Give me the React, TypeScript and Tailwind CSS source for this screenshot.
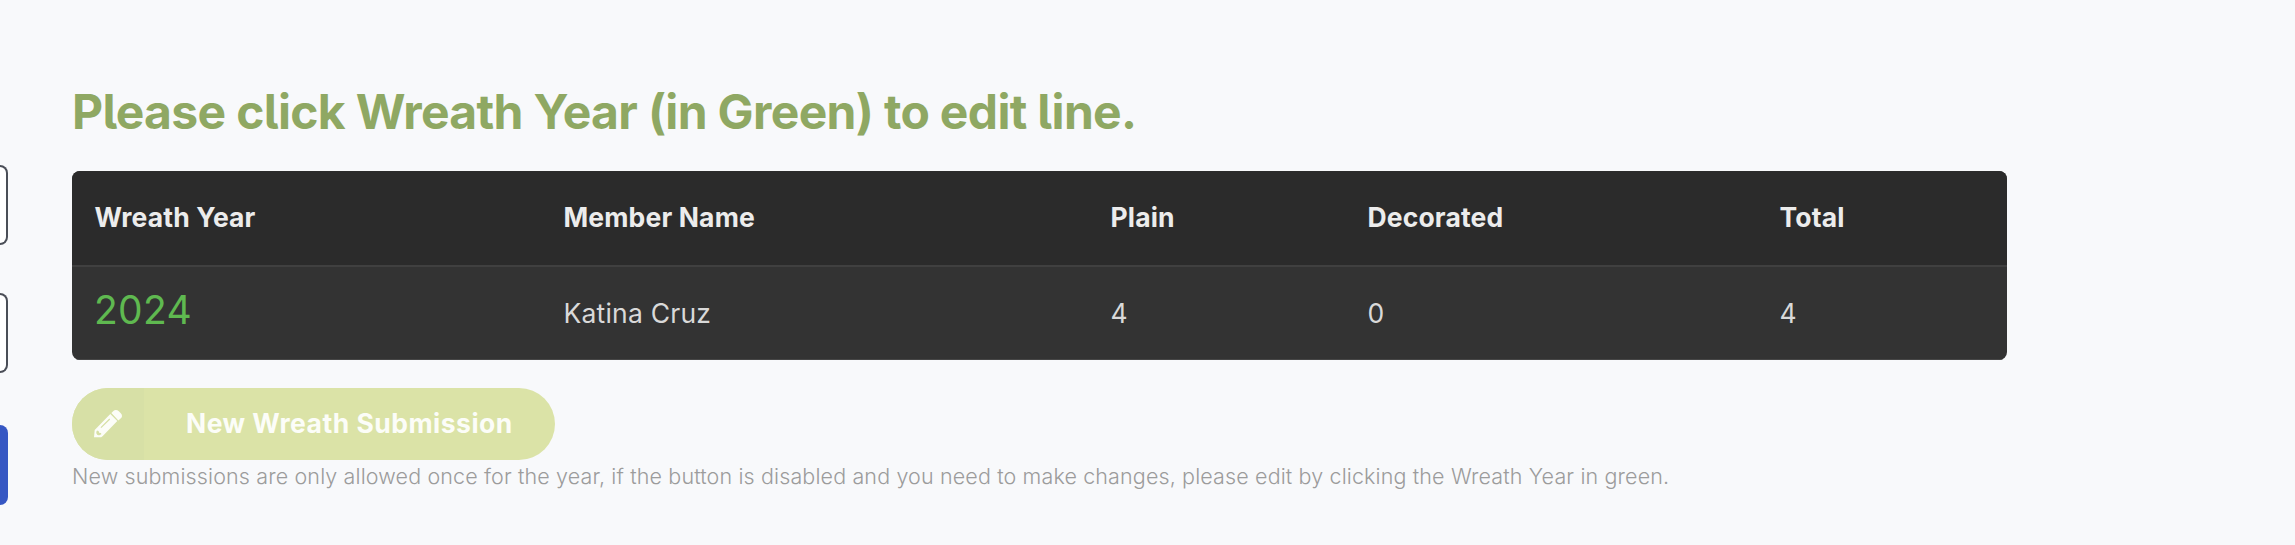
import type { ReactNode } from 'react'

type Submission = {
  year: number
  member: string
  plain: number
  decorated: number
  total: number
}

const submissions: Submission[] = [
  { year: 2024, member: 'Katina Cruz', plain: 4, decorated: 0, total: 4 },
]

function PencilIcon() {
  return (
    <svg viewBox="0 0 28 28" className="h-[28px] w-[28px]" fill="currentColor" aria-hidden="true">
      {/* eraser */}
      <path d="M17.4 2.9l2-2q1-.9 2.4-.9 1.8 0 3 1.2l2 2q1.2 1.2 1.2 2.7 0 1.2-.9 2.1l-2.7 2.5z" />
      {/* body, with the groove and the nib cut out */}
      <path
        fillRule="evenodd"
        d="M16.3 4.1L23.3 11 8.5 26.3l-1.3.9H0l.7-7.2zM15.3 8.6L6.5 17.2l.9.9 8.8-8.7zM3 20.5q-1.2 1.5-.5 3.2 1 2 3 1.5l1.800-1-.3-1.3-1.9-.1-.5-1.8z"
      />
    </svg>
  )
}

function HeadCell({ children }: { children: ReactNode }) {
  return <th className="pb-[2px] pl-[22.5px] text-left font-bold tracking-[0.15px] text-[#ececec]">{children}</th>
}

function Cell({ children }: { children: ReactNode }) {
  return <td className="pb-px pl-[22.5px] tracking-[0.2px] text-[#d9d9d9]">{children}</td>
}

// Right edge of the form that sits next to the table
function FormEdge() {
  return (
    <div className="w-2 shrink-0 pt-[165px]">
      <div className="h-[80px] rounded-r-lg border-2 border-l-0 border-[#4a4e57] bg-white" />
      <div className="mt-12 h-[80px] rounded-r-lg border-2 border-l-0 border-[#4a4e57] bg-white" />
      <div className="mt-[52px] h-[80px] rounded-r-lg bg-[#3657c3]" />
    </div>
  )
}

export default function App() {
  return (
    <div className="flex h-[545px] w-[2295px] overflow-hidden bg-[#f8f9fb] font-['Inter',sans-serif]">
      <FormEdge />
      <main className="ml-16 pt-[80px]">
        <h2 className="h-[91px] text-[48px] leading-[64px] font-bold tracking-[-0.66px] whitespace-nowrap text-[#8fa863] [font-feature-settings:'cv05']">
          Please click Wreath Year (in Green) to edit line.
        </h2>

        <div className="h-[189px] w-[1935px] overflow-hidden rounded-lg bg-[#333333]">
          <table className="w-full table-fixed border-collapse text-[26.5px] leading-[36px]">
            <colgroup>
              <col className="w-[469px]" />
              <col className="w-[547px]" />
              <col className="w-[257px]" />
              <col className="w-[412px]" />
              <col className="w-[250px]" />
            </colgroup>
            <thead>
              <tr className="h-[95px] border-b-2 border-[#404040] bg-[#2b2b2b]">
                <HeadCell>Wreath Year</HeadCell>
                <HeadCell>Member Name</HeadCell>
                <HeadCell>Plain</HeadCell>
                <HeadCell>Decorated</HeadCell>
                <HeadCell>Total</HeadCell>
              </tr>
            </thead>
            <tbody>
              {submissions.map((row) => (
                <tr key={row.year} className="h-[94px] border-b-2 border-[#464646]">
                  <td className="pb-[2px] pl-[22px]">
                    <a href="#" className="text-[39px] tracking-[0.3px] text-[#5fb950]">{row.year}</a>
                  </td>
                  <Cell>{row.member}</Cell>
                  <Cell>{row.plain}</Cell>
                  <Cell>{row.decorated}</Cell>
                  <Cell>{row.total}</Cell>
                </tr>
              ))}
            </tbody>
          </table>
        </div>

        <button
          disabled
          className="mt-7 flex h-[72px] w-[483px] items-center overflow-hidden rounded-full bg-[#dbe3a7] text-[26.5px] font-bold text-[#fcfdf8]"
        >
          <span className="flex h-full w-[72px] items-center bg-[#d7e0a6] pl-[22px]">
            <PencilIcon />
          </span>
          <span className="ml-[42px] tracking-[0.48px] whitespace-nowrap">New Wreath Submission</span>
        </button>
        <p className="text-[21.5px] leading-[33px] font-light tracking-[0.13px] whitespace-nowrap text-[#9c9c9c]">
          New submissions are only allowed once for the year, if the button is disabled and you need to make changes, please edit by clicking the Wreath Year in green.
        </p>
      </main>
    </div>
  )
}
